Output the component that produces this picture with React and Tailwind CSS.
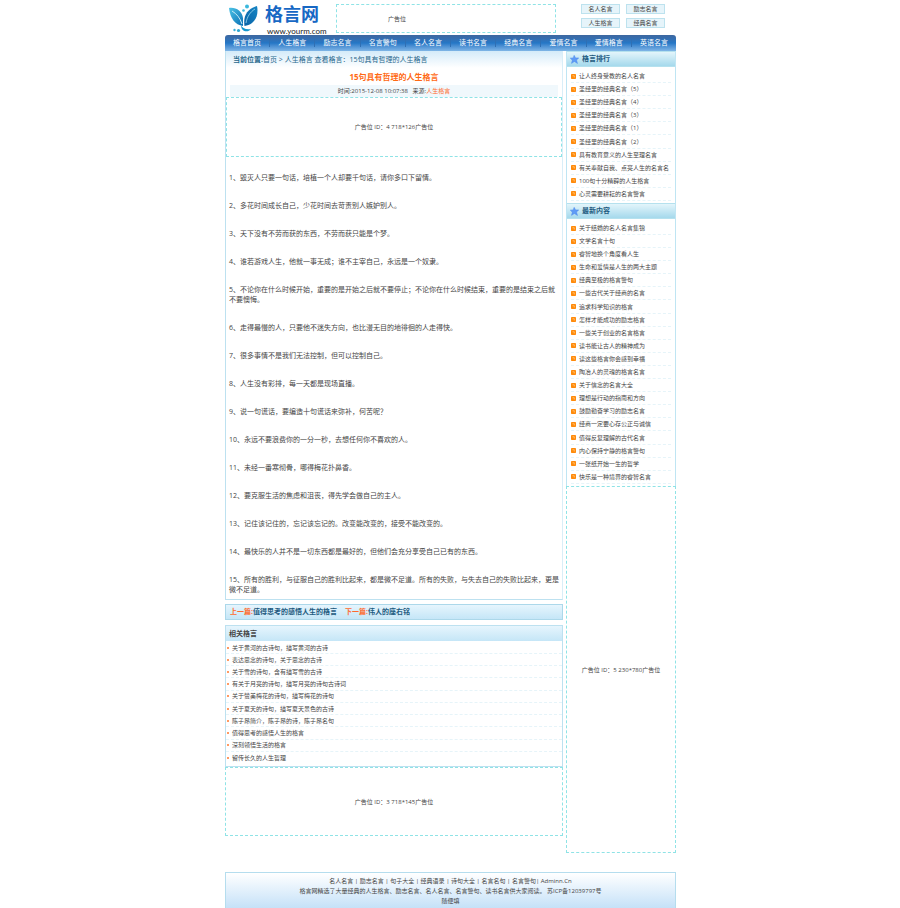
import { Fragment } from 'react'

const NAV = ['格言首页', '人生格言', '励志名言', '名言警句', '名人名言', '读书名言', '经典名言', '爱情名言', '爱情格言', '英语名言']

const QUICK_LINKS = ['名人名言', '励志名言', '人生格言', '经典名言']

const QUOTES = [
  '毁灭人只要一句话，培植一个人却要千句话，请你多口下留情。',
  '多花时间成长自己，少花时间去苛责别人嫉妒别人。',
  '天下没有不劳而获的东西，不劳而获只能是个梦。',
  '谁若游戏人生，他就一事无成；谁不主宰自己，永远是一个奴隶。',
  '不论你在什么时候开始，重要的是开始之后就不要停止；不论你在什么时候结束，重要的是结束之后就不要懊悔。',
  '走得最慢的人，只要他不迷失方向，也比漫无目的地徘徊的人走得快。',
  '很多事情不是我们无法控制，但可以控制自己。',
  '人生没有彩排，每一天都是现场直播。',
  '说一句谎话，要编造十句谎话来弥补，何苦呢？',
  '永远不要浪费你的一分一秒，去想任何你不喜欢的人。',
  '未经一番寒彻骨，哪得梅花扑鼻香。',
  '要克服生活的焦虑和沮丧，得先学会做自己的主人。',
  '记住该记住的，忘记该忘记的。改变能改变的，接受不能改变的。',
  '最快乐的人并不是一切东西都是最好的，但他们会充分享受自己已有的东西。',
  '所有的胜利，与征服自己的胜利比起来，都是微不足道。所有的失败，与失去自己的失败比起来，更是微不足道。',
]

const RELATED = [
  '关于黄河的古诗句，描写黄河的古诗',
  '表达思念的诗句，关于思念的古诗',
  '关于雪的诗句，含有描写雪的古诗',
  '有关于月亮的诗句，描写月亮的诗句古诗词',
  '关于赞美梅花的诗句，描写梅花的诗句',
  '关于夏天的诗句，描写夏天景色的古诗',
  '陈子昂简介，陈子昂的诗，陈子昂名句',
  '值得思考的感悟人生的格言',
  '深刻领悟生活的格言',
  '留传长久的人生哲理',
]

const RANKING = [
  '让人终身受教的名人名言',
  '圣经里的经典名言（5）',
  '圣经里的经典名言（4）',
  '圣经里的经典名言（3）',
  '圣经里的经典名言（1）',
  '圣经里的经典名言（2）',
  '具有教育意义的人生至理名言',
  '有关奉献自我、点亮人生的名言名',
  '100句十分精辟的人生格言',
  '心灵需要耕耘的名言警言',
]

const LATEST = [
  '关于结婚的名人名言集锦',
  '文学名言十句',
  '睿智地换个角度看人生',
  '生命和爱情是人生的两大主题',
  '经典至极的格言警句',
  '一些古代关于经商的名言',
  '追求科学知识的格言',
  '怎样才能成功的励志格言',
  '一些关于创业的名言格言',
  '读书能让古人的精神成为',
  '读这些格言你会感到幸福',
  '陶冶人的灵魂的格言名言',
  '关于信念的名言大全',
  '理想是行动的指南和方向',
  '鼓励勤奋学习的励志名言',
  '经商一定要心存公正与诚信',
  '值得反复理解的古代名言',
  '内心保持宁静的格言警句',
  '一张纸开始一生的哲学',
  '快乐是一种境界的睿智名言',
]

const FOOTER_LINKS = ['名人名言', '励志名言', '句子大全', '经典语录', '诗句大全', '名言名句', '名言警句']

const Logo = () => (
  <svg viewBox="0 0 30 32" className="h-8 w-[30px] shrink-0">
    <defs>
      <linearGradient id="leaf-left" x1="0" y1="0" x2="1" y2="1">
        <stop offset="0" stopColor="#4cc3e6" />
        <stop offset="1" stopColor="#0a6fb4" />
      </linearGradient>
      <linearGradient id="leaf-right" x1="1" y1="0" x2="0" y2="1">
        <stop offset="0" stopColor="#1585c4" />
        <stop offset="1" stopColor="#0a62a6" />
      </linearGradient>
    </defs>
    <path d="M0 6C7 5 13 9 14 16L14 24C6 23 1 16 0 6Z" fill="url(#leaf-left)" />
    <path d="M15.500 24C14 14 18 7 28 4C30 13 26 23 15.500 24Z" fill="url(#leaf-right)" />
    <path d="M3 9C8 12 11 16 13 22" fill="none" stroke="#d9f4fb" strokeWidth=".9" />
    <path d="M17 21C18 15 21 10 26 7" fill="none" stroke="#9edcf0" strokeWidth=".8" />
    <path d="M12 23C13 26 17 28 22 27C19 31 12 30 12 23Z" fill="#1597cf" />
    <circle cx="18" cy="4.500" r="2" fill="#3bb8dc" />
    <circle cx="14.500" cy="8.500" r="1.300" fill="#3bb8dc" />
    <circle cx="9.500" cy="28.500" r="1.600" fill="#2ca6d2" />
    <circle cx="5.500" cy="28" r="1.200" fill="#3bb0d8" />
  </svg>
)

const StarIcon = () => (
  <svg viewBox="0 0 10 10" className="h-[9px] w-[9px] shrink-0">
    <path d="M4.600 .4L6.200 3.200L9.700 3.200L7.300 5.600L8.300 9.400L4.900 7.300L1.700 9.300L2.600 5.700L.3 3.500L3.600 3.200Z" fill="#5f9bf6" stroke="#4585ea" strokeWidth=".5" />
  </svg>
)

const ArrowBullet = () => (
  <svg viewBox="0 0 10 10" className="h-[5px] w-[5px] shrink-0">
    <rect width="10" height="10" rx="1.500" fill="#ff8a0a" />
    <path d="M3 3.500H6.500V7" fill="none" stroke="#ffd08c" strokeWidth="1.400" />
  </svg>
)

function AdBox({ children, className }) {
  return (
    <div className={`flex items-center justify-center border border-dashed border-[#8fe3e6] ${className}`}>
      {children}
    </div>
  )
}

function SidePanel({ title, items, listClass }) {
  return (
    <section className="border-x border-[#bfe5f3]">
      <h2 className="flex h-4 items-center gap-[3px] border-y border-[#b5e1ee] bg-linear-to-b from-[#e3f5fb] to-[#a5d9ec] px-[3px] text-[7px] font-bold text-[#1d5a80]">
        <StarIcon />
        {title}
      </h2>
      <ul className={`flex flex-col justify-between px-1 pt-[3px] ${listClass}`}>
        {items.map((item) => (
          <li key={item} className="flex h-[13px] items-center gap-[3px] border-b border-dashed border-[#e6f4f9]">
            <ArrowBullet />
            <a href="#" className="whitespace-nowrap">{item}</a>
          </li>
        ))}
      </ul>
    </section>
  )
}

export default function App() {
  return (
    <div className="mx-auto w-full max-w-[452px] bg-white pl-px font-['Open_Sans','Noto_Sans_CJK_SC',sans-serif] text-[6px] leading-[10px] text-[#444]">
      <header className="flex h-[35px] items-start">
        <a href="#" className="flex w-[111px] shrink-0 pt-[2px] pl-1">
          <Logo />
          <span className="flex flex-col pl-[6px]">
            <span className="text-[18px] leading-[25px] font-bold whitespace-nowrap text-[#1768c4]">格言网</span>
            <span className="pl-[2px] font-[Lato,sans-serif] text-[8px] leading-[8px] text-[#222]">www.yourm.com</span>
          </span>
        </a>
        <AdBox className="mt-1 h-[29px] flex-1 pr-[98px]">广告位</AdBox>
        <div className="ml-[25px] grid grid-cols-2 gap-x-[6px] gap-y-1 pt-1 pr-[11px]">
          {QUICK_LINKS.map((label) => (
            <a key={label} href="#" className="flex h-[10px] w-[39px] items-center justify-center border border-[#bde2ee] bg-[#e6f4fa]">
              {label}
            </a>
          ))}
        </div>
      </header>

      <nav className="flex h-4 items-center rounded-t-[3px] bg-linear-to-b from-[#3d679f] via-[#2477c6] to-[#7fb5e6] text-[7px] text-white">
        {NAV.map((label) => (
          <a key={label} href="#" className="flex-1 border-r border-[#2f6fb3] text-center leading-[8px] whitespace-nowrap last:border-r-0">
            {label}
          </a>
        ))}
      </nav>

      <div className="flex gap-[3px]">
        <main className="min-w-0 flex-1">
          <article className="border border-t-0 border-[#bde1f0] border-r-[#d9eef8] pb-1">
            <div className="flex h-[17px] items-center bg-linear-to-b from-[#d4ebf9] to-white pl-[7px] text-[7px] whitespace-pre text-[#27678c]">
              <b>当前位置:</b>
              {' '}<a href="#">首页</a>{' > '}<a href="#">人生格言</a>{' 查看格言：15句具有哲理的人生格言'}
            </div>
            <h1 className="py-1 text-center text-[8px] leading-[9px] font-bold text-[#ff6a14]">15句具有哲理的人生格言</h1>
            <p className="mx-1 flex h-3 items-center justify-center bg-[#f0f8fc] whitespace-pre">
              时间:2015-12-08 10:07:38   来源:<a href="#" className="text-[#ff6a2c]">人生格言</a>
            </p>
            <AdBox className="h-[60px]">广告位 ID：4 718*126广告位</AdBox>
            <div className="flex flex-col gap-[18px] px-[3px] pt-4 text-[7px]">
              {QUOTES.map((quote, i) => (
                <p key={quote}>{`${i + 1}、${quote}`}</p>
              ))}
            </div>
          </article>

          <div className="mt-1 flex h-4 items-center gap-2 border border-[#acd8ea] bg-linear-to-b from-[#e6f5fd] to-[#c5e6f7] px-1 text-[7px] font-bold text-[#1d5a80]">
            <span><span className="text-[#ff6a2c]">上一篇:</span><a href="#">值得思考的感悟人生的格言</a></span>
            <span><span className="text-[#ff6a2c]">下一篇:</span><a href="#">伟人的座右铭</a></span>
          </div>

          <section className="mt-[5px] border border-[#bde1f0]">
            <h2 className="flex h-[15px] items-center bg-linear-to-b from-[#e6f5fd] to-[#c5e6f7] px-[3px] text-[7px] font-bold">相关格言</h2>
            <ul className="flex min-h-[125px] flex-col justify-between pt-[1px] pb-[2px]">
              {RELATED.map((item) => (
                <li key={item} className="flex h-3 items-center gap-[3px] border-b border-dashed border-[#e6f4f9] pl-[1px] last:border-b-0">
                  <span className="size-[2px] bg-[#ff9a62]" />
                  <a href="#">{item}</a>
                </li>
              ))}
            </ul>
          </section>

          <AdBox className="h-[69px]">广告位 ID：3 718*145广告位</AdBox>
        </main>

        <aside className="flex w-[110px] shrink-0 flex-col">
          <SidePanel title="格言排行" items={RANKING} listClass="min-h-[136px] pb-[2px]" />
          <SidePanel title="最新内容" items={LATEST} listClass="min-h-[267px] pb-[2px]" />
          <AdBox className="h-[367px]">广告位 ID：5 230*780广告位</AdBox>
        </aside>
      </div>

      <footer className="mt-[19px] border border-[#b5ddee] bg-linear-to-b from-white to-[#c5e1f8] pt-[3px] pb-[2px] text-center">
        <p>
          {FOOTER_LINKS.map((label, i) => (
            <Fragment key={label}>
              <a href="#">{label}</a>
              {i < FOOTER_LINKS.length - 1 ? ' | ' : '| '}
            </Fragment>
          ))}
          <a href="#">Adminn.Cn</a>
        </p>
        <p>格言网精选了大量经典的人生格言、励志名言、名人名言、名言警句、读书名言供大家阅读。 苏ICP备12039797号</p>
        <p>随便填</p>
      </footer>
    </div>
  )
}
